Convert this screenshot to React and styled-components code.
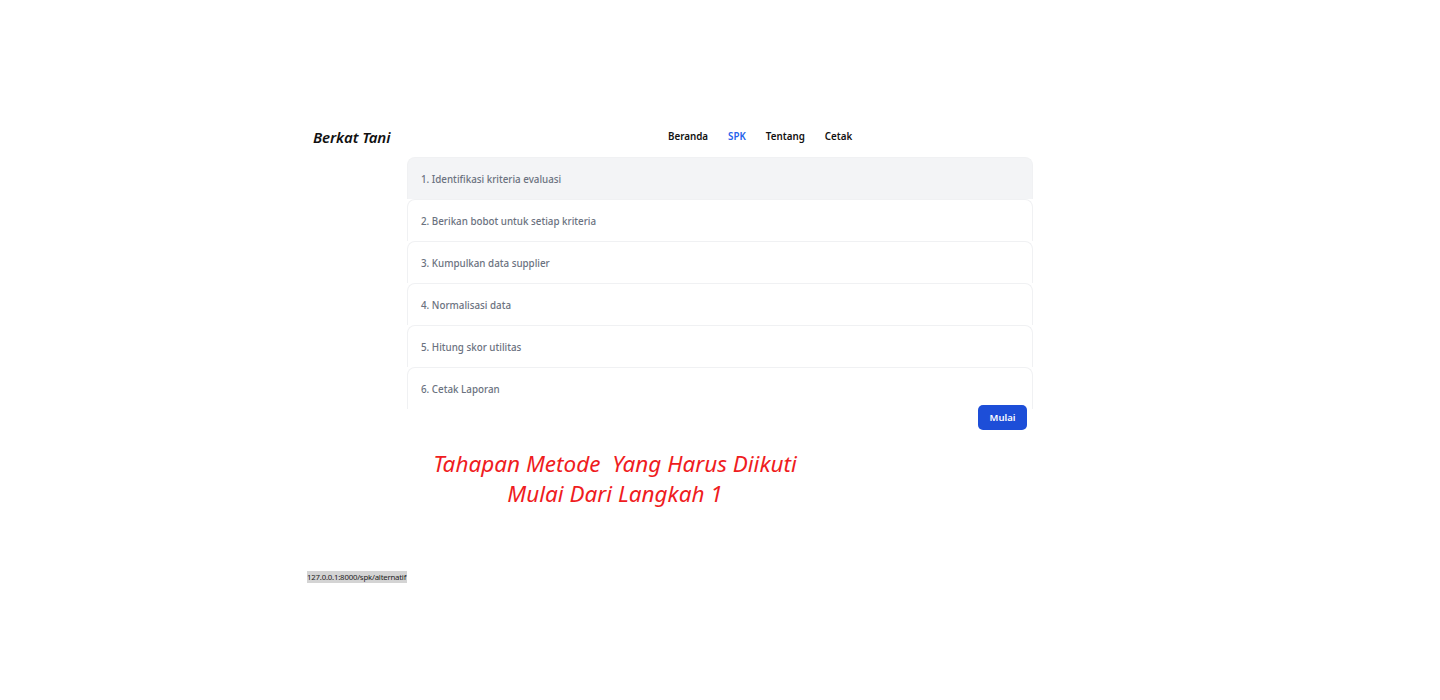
import React from 'react'
import { styled, createGlobalStyle } from 'styled-components'

const GlobalStyle = createGlobalStyle`
  html, body {
    margin: 0;
    padding: 0;
    background: #ffffff;
    font-family: "Noto Sans", "Open Sans", sans-serif;
  }
`

const steps = [
    '1. Identifikasi kriteria evaluasi',
    '2. Berikan bobot untuk setiap kriteria',
    '3. Kumpulkan data supplier',
    '4. Normalisasi data',
    '5. Hitung skor utilitas',
    '6. Cetak Laporan',
]

const navLinks = [
    { label: 'Beranda' },
    { label: 'SPK', active: true },
    { label: 'Tentang' },
    { label: 'Cetak' },
]

const Page = styled.div`
    width: 1440px;
    height: 700px;
    padding-top: 123px;
    box-sizing: border-box;
    overflow: hidden;
`

const Header = styled.header`
    display: flex;
    align-items: center;
    padding-left: 313px;
    height: 27px;
`

const Logo = styled.div`
    width: 80px;
    font-size: 15px;
    font-weight: 600;
    font-style: italic;
    color: #111111;
    letter-spacing: -0.1px;
`

const Nav = styled.nav`
    display: flex;
    gap: 20px;
    margin-left: 275px;
`

const NavLink = styled.a`
    font-size: 9.8px;
    font-weight: 600;
    color: ${(p) => (p.$active ? '#2563eb' : '#111111')};
    text-decoration: none;
`

const Main = styled.div`
    width: 626px;
    margin-left: 407px;
    margin-top: 7px;
`

const StepList = styled.div`
    display: flex;
    flex-direction: column;
    height: 252px;
    overflow: hidden;
`

const Step = styled.div`
    flex: 0 0 42px;
    display: flex;
    align-items: center;
    box-sizing: border-box;
    padding: 2px 0 0 13px;
    border: 1px solid #f0f1f3;
    border-bottom: none;
    border-radius: 8px 8px 0 0;
    background: ${(p) => (p.$active ? '#f3f4f6' : '#ffffff')};
    font-size: 9.8px;
    font-weight: 500;
    color: #6b7280;
`

const Actions = styled.div`
    display: flex;
    justify-content: flex-end;
    padding-right: 6px;
    margin-top: -4px;
`

const StartButton = styled.button`
    width: 49px;
    height: 25px;
    border: none;
    border-radius: 5px;
    background: #1d4ed8;
    color: #ffffff;
    font-family: inherit;
    font-size: 9.5px;
    font-weight: 600;
    padding: 0;
`

const Note = styled.div`
    width: 416px;
    margin: 19px 0 0 407px;
    text-align: center;
    font-size: 22.5px;
    line-height: 30px;
    font-style: italic;
    font-weight: 400;
    color: #ef1c21;
    white-space: pre;
`

const StatusBar = styled.div`
    display: inline-block;
    margin: 62px 0 0 307px;
    padding: 0 1px 0 0;
    background: #d4d4d4;
    font-size: 7.8px;
    line-height: 12px;
    color: #222222;
    letter-spacing: -0.2px;
`

const App = () => {
    return (
        <Page>
            <GlobalStyle />
            <Header>
                <Logo>Berkat Tani</Logo>
                <Nav>
                    {navLinks.map((l) => (
                        <NavLink key={l.label} $active={l.active}>{l.label}</NavLink>
                    ))}
                </Nav>
            </Header>

            <Main>
                <StepList>
                    {steps.map((s, i) => (
                        <Step key={s} $active={i === 0}>{s}</Step>
                    ))}
                </StepList>
                <Actions>
                    <StartButton>Mulai</StartButton>
                </Actions>
            </Main>

            <Note>{'Tahapan Metode  Yang Harus Diikuti\nMulai Dari Langkah 1'}</Note>

            <StatusBar>127.0.0.1:8000/spk/alternatif</StatusBar>
        </Page>
    )
}

export default App
